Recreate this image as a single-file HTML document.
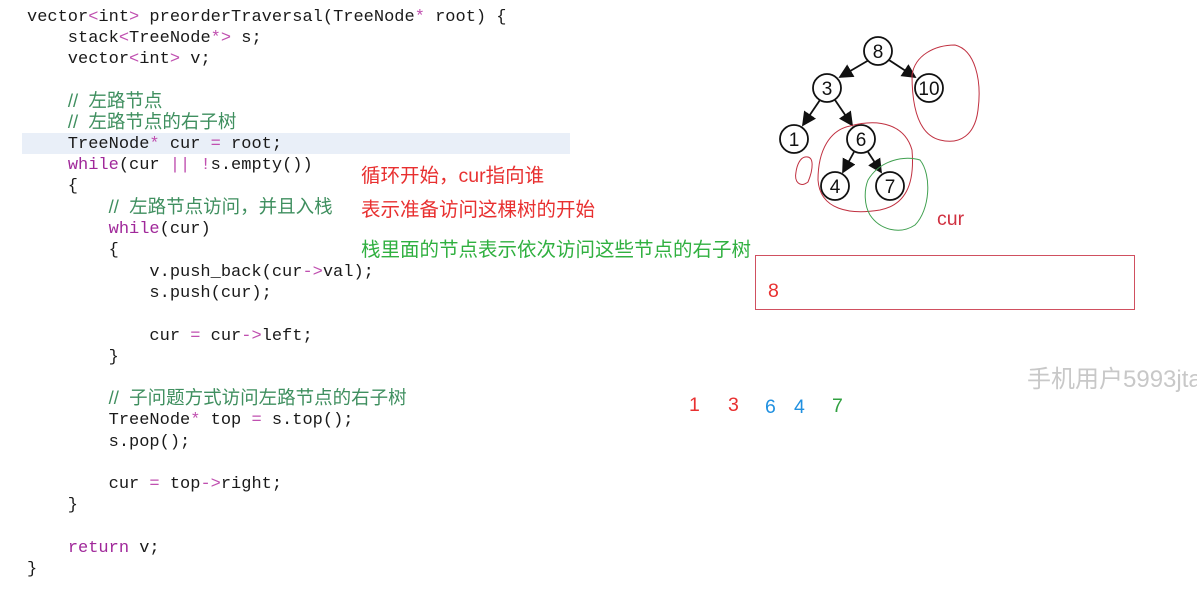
<!DOCTYPE html>
<html><head><meta charset="utf-8"><style>
body{margin:0;width:1197px;height:600px;background:#fff;position:relative;overflow:hidden}
.c{position:absolute;left:27px;font-family:"Liberation Mono","Noto Sans CJK SC",monospace;font-size:17px;color:#1a1a1a;white-space:pre;line-height:21px}
.k{color:#a0289a}.o{color:#c050b0}.g{color:#3f8f5f;font-family:"Liberation Sans","Noto Sans CJK SC",sans-serif;font-size:18.5px}
.a{position:absolute;font-family:"Liberation Sans","Noto Sans CJK SC",sans-serif;font-size:19.5px;white-space:nowrap}
</style></head><body>
<div style="position:absolute;left:22px;top:133px;width:548px;height:21px;background:#e9eff8"></div>
<div class="c" style="top:7px">vector<span class="o">&lt;</span>int<span class="o">&gt;</span> preorderTraversal(TreeNode<span class="o">*</span> root) {</div>
<div class="c" style="top:28px">    stack<span class="o">&lt;</span>TreeNode<span class="o">*&gt;</span> s;</div>
<div class="c" style="top:49px">    vector<span class="o">&lt;</span>int<span class="o">&gt;</span> v;</div>
<div class="c" style="top:90px">    <span class="g">//  左路节点</span></div>
<div class="c" style="top:111px">    <span class="g">//  左路节点的右子树</span></div>
<div class="c" style="top:134px">    TreeNode<span class="o">*</span> cur <span class="o">=</span> root;</div>
<div class="c" style="top:155px">    <span class="k">while</span>(cur <span class="o">||</span> <span class="o">!</span>s.empty())</div>
<div class="c" style="top:176px">    {</div>
<div class="c" style="top:196px">        <span class="g">//  左路节点访问，并且入栈</span></div>
<div class="c" style="top:219px">        <span class="k">while</span>(cur)</div>
<div class="c" style="top:240px">        {</div>
<div class="c" style="top:262px">            v.push_back(cur<span class="o">-&gt;</span>val);</div>
<div class="c" style="top:283px">            s.push(cur);</div>
<div class="c" style="top:326px">            cur <span class="o">=</span> cur<span class="o">-&gt;</span>left;</div>
<div class="c" style="top:347px">        }</div>
<div class="c" style="top:387px">        <span class="g">//  子问题方式访问左路节点的右子树</span></div>
<div class="c" style="top:410px">        TreeNode<span class="o">*</span> top <span class="o">=</span> s.top();</div>
<div class="c" style="top:432px">        s.pop();</div>
<div class="c" style="top:474px">        cur <span class="o">=</span> top<span class="o">-&gt;</span>right;</div>
<div class="c" style="top:495px">    }</div>
<div class="c" style="top:538px">    <span class="k">return</span> v;</div>
<div class="c" style="top:559px">}</div>
<div class="a" style="left:361px;top:159px;color:#e83030">循环开始，cur指向谁</div>
<div class="a" style="left:361px;top:193px;color:#e83030">表示准备访问这棵树的开始</div>
<div class="a" style="left:361px;top:233px;color:#30b040">栈里面的节点表示依次访问这些节点的右子树</div>
<div style="position:absolute;left:755px;top:255px;width:378px;height:53px;border:1px solid #d05060"></div>
<div class="a" style="left:768px;top:280px;color:#e83030">8</div>
<div class="a" style="left:937px;top:208px;color:#d03040">cur</div>
<div class="a" style="left:1027px;top:359px;color:#c8c8c8;font-size:24px">手机用户5993jta</div>
<div class="a" style="left:689px;top:394px;color:#e83030">1</div>
<div class="a" style="left:728px;top:394px;color:#e83030">3</div>
<div class="a" style="left:765px;top:396px;color:#2090e0">6</div>
<div class="a" style="left:794px;top:396px;color:#2090e0">4</div>
<div class="a" style="left:832px;top:395px;color:#30a040">7</div>
<svg style="position:absolute;left:0;top:0" width="1197" height="600">
<defs><marker id="m" markerWidth="8" markerHeight="8" refX="7" refY="4" orient="auto"><path d="M0,0 L8,4 L0,8z" fill="#111"/></marker></defs>
<g stroke="#111" stroke-width="1.8" fill="none">
<line x1="869" y1="60" x2="840" y2="77" marker-end="url(#m)"/>
<line x1="889" y1="60" x2="915" y2="77" marker-end="url(#m)"/>
<line x1="820" y1="100" x2="803" y2="125" marker-end="url(#m)"/>
<line x1="835" y1="100" x2="852" y2="125" marker-end="url(#m)"/>
<line x1="854" y1="152" x2="843" y2="172" marker-end="url(#m)"/>
<line x1="868" y1="152" x2="881" y2="172" marker-end="url(#m)"/>
</g>
<g stroke="#111" stroke-width="1.8" fill="#fff">
<circle cx="878" cy="51" r="14"/><circle cx="827" cy="88" r="14"/><circle cx="929" cy="88" r="14"/>
<circle cx="794" cy="139" r="14"/><circle cx="861" cy="139" r="14"/><circle cx="835" cy="186" r="14"/><circle cx="890" cy="186" r="14"/>
</g>
<g font-family="Liberation Sans,sans-serif" font-size="19" text-anchor="middle" fill="#111">
<text x="878" y="58">8</text><text x="827" y="95">3</text><text x="929" y="95">10</text><text x="794" y="146">1</text><text x="861" y="146">6</text><text x="835" y="193">4</text><text x="890" y="193">7</text>
</g>
<g fill="none" stroke-width="1">
<path d="M912,75 C915,55 935,45 955,45 C975,50 982,80 978,110 C975,135 960,145 940,140 C920,135 912,110 912,75" stroke="#c03040"/>
<path d="M850,126 C880,118 905,125 912,150 C915,185 905,205 880,210 C850,215 820,210 818,180 C818,150 830,130 850,126" stroke="#c03040"/>
<path d="M805,157 C815,155 813,170 808,182 C800,188 794,182 796,172 C797,165 800,158 805,157" stroke="#c03040"/>
<path d="M868,180 C880,160 905,155 920,160 C932,175 930,210 915,225 C900,235 880,230 870,215 C864,205 864,190 868,180" stroke="#40a050"/>
</g>
</svg>
</body></html>
